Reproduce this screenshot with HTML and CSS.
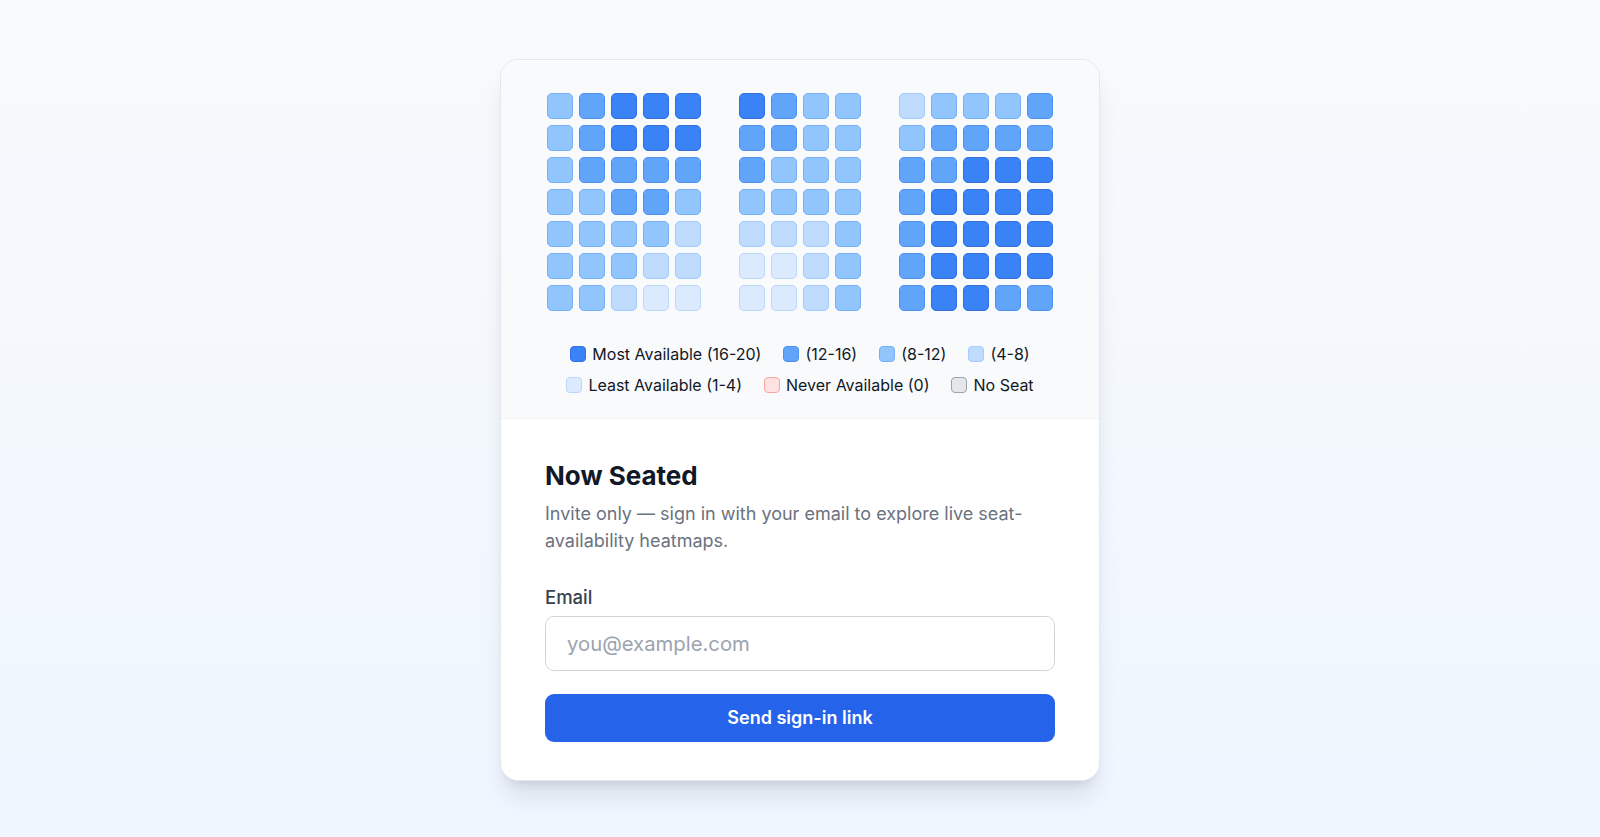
FILE: index.html
```html
<!DOCTYPE html>
<html>
<head>
    <title>Now Seated</title>
    <link rel="stylesheet" href="styles.css">
</head>
<body>
    <div class="card">
        <!-- Heatmap preview -->
        <div class="preview">
            <div class="seatmap">
                <div class="section cols-5">
                    <span class="seat l3"></span><span class="seat l4"></span><span class="seat l5"></span><span class="seat l5"></span><span class="seat l5"></span>
                    <span class="seat l3"></span><span class="seat l4"></span><span class="seat l5"></span><span class="seat l5"></span><span class="seat l5"></span>
                    <span class="seat l3"></span><span class="seat l4"></span><span class="seat l4"></span><span class="seat l4"></span><span class="seat l4"></span>
                    <span class="seat l3"></span><span class="seat l3"></span><span class="seat l4"></span><span class="seat l4"></span><span class="seat l3"></span>
                    <span class="seat l3"></span><span class="seat l3"></span><span class="seat l3"></span><span class="seat l3"></span><span class="seat l2"></span>
                    <span class="seat l3"></span><span class="seat l3"></span><span class="seat l3"></span><span class="seat l2"></span><span class="seat l2"></span>
                    <span class="seat l3"></span><span class="seat l3"></span><span class="seat l2"></span><span class="seat l1"></span><span class="seat l1"></span>
                </div>
                <div class="section cols-4">
                    <span class="seat l5"></span><span class="seat l4"></span><span class="seat l3"></span><span class="seat l3"></span>
                    <span class="seat l4"></span><span class="seat l4"></span><span class="seat l3"></span><span class="seat l3"></span>
                    <span class="seat l4"></span><span class="seat l3"></span><span class="seat l3"></span><span class="seat l3"></span>
                    <span class="seat l3"></span><span class="seat l3"></span><span class="seat l3"></span><span class="seat l3"></span>
                    <span class="seat l2"></span><span class="seat l2"></span><span class="seat l2"></span><span class="seat l3"></span>
                    <span class="seat l1"></span><span class="seat l1"></span><span class="seat l2"></span><span class="seat l3"></span>
                    <span class="seat l1"></span><span class="seat l1"></span><span class="seat l2"></span><span class="seat l3"></span>
                </div>
                <div class="section cols-5">
                    <span class="seat l2"></span><span class="seat l3"></span><span class="seat l3"></span><span class="seat l3"></span><span class="seat l4"></span>
                    <span class="seat l3"></span><span class="seat l4"></span><span class="seat l4"></span><span class="seat l4"></span><span class="seat l4"></span>
                    <span class="seat l4"></span><span class="seat l4"></span><span class="seat l5"></span><span class="seat l5"></span><span class="seat l5"></span>
                    <span class="seat l4"></span><span class="seat l5"></span><span class="seat l5"></span><span class="seat l5"></span><span class="seat l5"></span>
                    <span class="seat l4"></span><span class="seat l5"></span><span class="seat l5"></span><span class="seat l5"></span><span class="seat l5"></span>
                    <span class="seat l4"></span><span class="seat l5"></span><span class="seat l5"></span><span class="seat l5"></span><span class="seat l5"></span>
                    <span class="seat l4"></span><span class="seat l5"></span><span class="seat l5"></span><span class="seat l4"></span><span class="seat l4"></span>
                </div>
            </div>

            <ul class="legend">
                <li><span class="swatch l5"></span>Most Available (16-20)</li>
                <li><span class="swatch l4"></span>(12-16)</li>
                <li><span class="swatch l3"></span>(8-12)</li>
                <li><span class="swatch l2"></span>(4-8)</li>
                <li><span class="swatch l1"></span>Least Available (1-4)</li>
                <li><span class="swatch never"></span>Never Available (0)</li>
                <li><span class="swatch none"></span>No Seat</li>
            </ul>
        </div>

        <!-- Sign in form -->
        <form class="signin" onsubmit="return false">
            <h1>Now Seated</h1>
            <p class="intro">Invite only — sign in with your email to explore live seat-availability heatmaps.</p>
            <label for="email">Email</label>
            <input type="email" id="email" name="email" placeholder="you@example.com" required>
            <button type="submit">Send sign-in link</button>
        </form>
    </div>
</body>
</html>
```

FILE: styles.css
```css
/* Global CSS */
* {
    box-sizing: border-box;
}

body {
    margin: 0;
    padding-top: 2px;
    min-height: 100vh;
    display: flex;
    align-items: center;
    justify-content: center;
    font-family: Inter, "Noto Sans", sans-serif;
    background: linear-gradient(to bottom, #f8fafc, #eff6ff);
}

/* Card */
.card {
    width: 600px;
    background-color: #fff;
    border: 1px solid #e5e7eb;
    border-radius: 18px;
    overflow: hidden;
    box-shadow: 0 20px 25px -5px rgba(15, 23, 42, 0.1), 0 8px 10px -6px rgba(15, 23, 42, 0.1);
}

/* Heatmap preview */
.preview {
    padding: 33px 44px 23px;
    background-color: #f9fafb;
    border-bottom: 1px solid #f1f2f4;
}

.seatmap {
    display: flex;
    justify-content: center;
    gap: 38px;
}

.section {
    display: grid;
    gap: 6px;
}

.cols-5 {
    grid-template-columns: repeat(5, 26px);
}

.cols-4 {
    grid-template-columns: repeat(4, 26px);
}

.seat,
.swatch {
    border-width: 1px;
    border-style: solid;
}

.seat {
    display: block;
    height: 26px;
    border-radius: 5px;
}

/* Availability levels, 5 = most seats free */
.l5 {
    background-color: #3b82f6;
    border-color: #2f6fe8;
}

.l4 {
    background-color: #60a5fa;
    border-color: #4b91f5;
}

.l3 {
    background-color: #93c5fd;
    border-color: #74b0fb;
}

.l2 {
    background-color: #bfdbfe;
    border-color: #a3c9fd;
}

.l1 {
    background-color: #dbeafe;
    border-color: #bcd6fc;
}

.never {
    background-color: #fee2e2;
    border-color: #fca5a5;
}

.none {
    background-color: #e5e7eb;
    border-color: #9ca3af;
}

/* Legend */
.legend {
    list-style: none;
    margin: 33px 0 0;
    padding: 0;
    display: flex;
    flex-wrap: wrap;
    justify-content: center;
    column-gap: 22px;
    row-gap: 11px;
    font-size: 16px;
    line-height: 20px;
    color: #111827;
}

.legend li {
    display: flex;
    align-items: center;
    gap: 6px;
}

.swatch {
    width: 16px;
    height: 16px;
    border-radius: 4px;
}

/* Sign in form */
.signin {
    display: flex;
    flex-direction: column;
    padding: 41px 44px 38px;
}

.signin h1 {
    margin: 0;
    font-size: 26px;
    line-height: 31px;
    font-weight: 700;
    color: #111827;
}

.intro {
    margin: 9px 0 0;
    font-size: 18px;
    line-height: 27px;
    color: #6b7280;
}

.signin label {
    margin-top: 31px;
    font-size: 18.5px;
    line-height: 24px;
    font-weight: 500;
    color: #374151;
}

.signin input {
    margin-top: 7px;
    height: 55px;
    padding: 0 21px;
    font-family: inherit;
    font-size: 20.3px;
    color: #111827;
    border: 1px solid #d1d5db;
    border-radius: 9px;
    outline: none;
}

.signin input::placeholder {
    color: #9ca3af;
}

.signin button {
    margin-top: 23px;
    height: 48px;
    font-family: inherit;
    font-size: 18px;
    font-weight: 600;
    color: #fff;
    background-color: #2563eb;
    border: none;
    border-radius: 9px;
    cursor: pointer;
}

.signin button:hover {
    background-color: #1d4ed8;
}
```
